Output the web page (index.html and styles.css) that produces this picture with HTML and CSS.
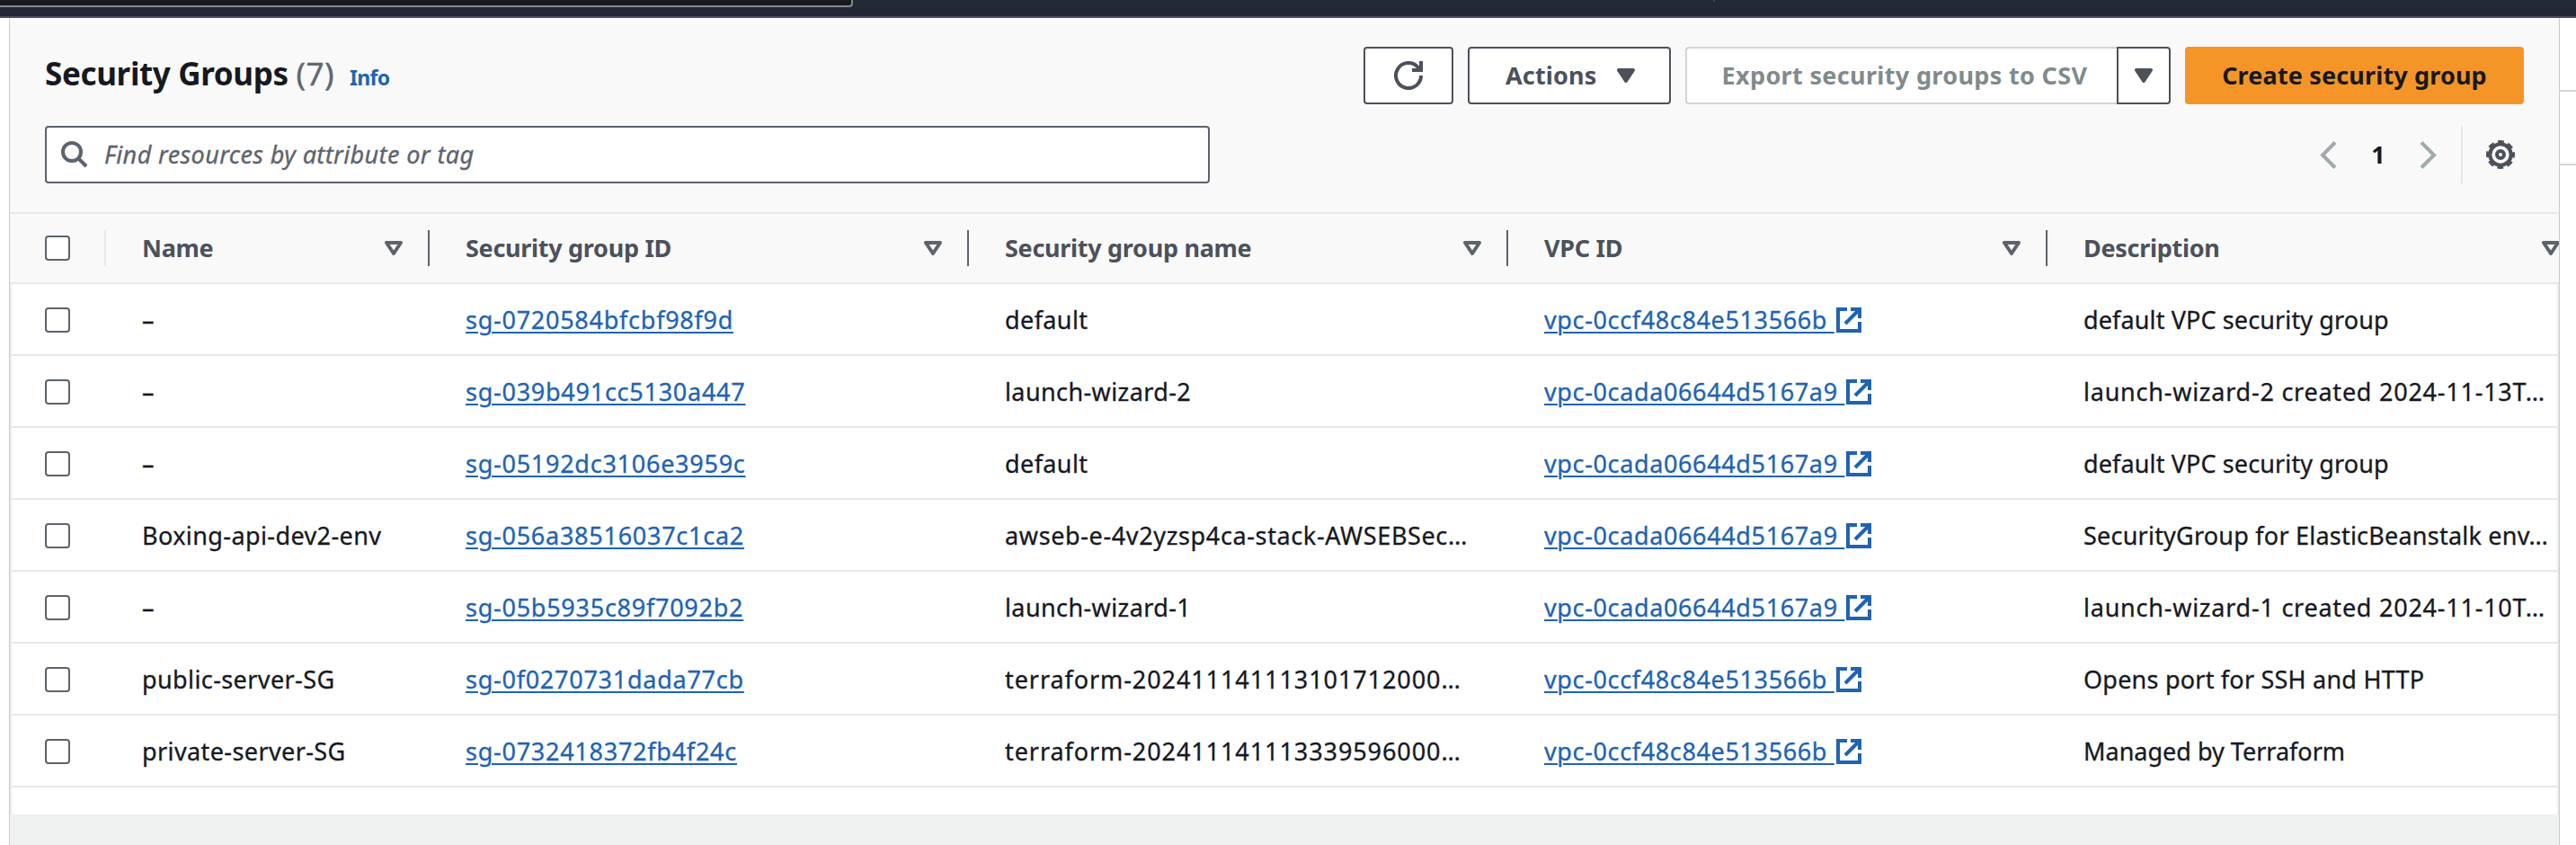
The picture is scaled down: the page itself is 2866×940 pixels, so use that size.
FILE: index.html
```html
<!DOCTYPE html>
<html lang="en">
<head>
<meta charset="utf-8">
<title>Security Groups</title>
<link rel="stylesheet" href="styles.css">
</head>
<body>
<svg class="defs" aria-hidden="true">
  <symbol id="ext" viewBox="0 0 28 28"><path d="M12 2H2V26H26V16M10 18L26 2M16 2H26V12"/></symbol>
  <symbol id="caret" viewBox="0 0 20 16"><path d="M2 2H18L10 14Z"/></symbol>
</svg>
<header class="nav"><div class="nav-search"></div><span class="nav-tick"></span></header>
<div class="page">
  <main class="panel">
    <section class="top">
      <div class="bar">
        <h1 class="title">Security Groups <span class="count">(7)</span><a class="info">Info</a></h1>
        <div class="actions">
          <button class="btn refresh"><svg class="i32" viewBox="0 0 32 32"><path d="M30 16A14 14 0 1 1 26.5 6.8L29 10M30 0V10H20"/></svg></button>
          <button class="btn menu">Actions<svg class="caret solid"><use href="#caret"/></svg></button>
          <div class="split">
            <button class="btn disabled">Export security groups to CSV</button>
            <button class="btn drop"><svg class="caret solid"><use href="#caret"/></svg></button>
          </div>
          <button class="btn primary">Create security group</button>
        </div>
      </div>
      <div class="bar tools">
        <div class="search"><svg class="mag" viewBox="0 0 30 30"><circle cx="12" cy="12" r="10"/><path d="M19 19L28 28"/></svg><span>Find resources by attribute or tag</span></div>
        <div class="pager">
          <svg class="chev" viewBox="0 0 19 31"><path d="M17 1.5L3 15.5L17 29.5"/></svg>
          <b class="num">1</b>
          <svg class="chev" viewBox="0 0 19 31"><path d="M2 1.5L16 15.5L2 29.5"/></svg>
          <span class="sep"></span>
          <svg class="i32 gear" viewBox="0 0 32 32"><circle cx="16" cy="16" r="11.7"/><circle class="teeth" cx="16" cy="16" r="14.5"/><circle cx="16" cy="16" r="4"/></svg>
        </div>
      </div>
    </section>
    <table class="grid">
      <colgroup><col class="c-check"><col class="c-name"><col class="c-wide"><col class="c-wide"><col class="c-wide"><col class="c-wide"></colgroup>
      <thead>
        <tr>
          <th><div class="h pick"><i class="box"></i></div></th>
          <th><div class="h">Name<svg class="caret"><use href="#caret"/></svg></div></th>
          <th><div class="h">Security group ID<svg class="caret"><use href="#caret"/></svg></div></th>
          <th><div class="h">Security group name<svg class="caret"><use href="#caret"/></svg></div></th>
          <th><div class="h">VPC ID<svg class="caret"><use href="#caret"/></svg></div></th>
          <th><div class="h">Description<svg class="caret"><use href="#caret"/></svg></div></th>
        </tr>
      </thead>
      <tbody>
        <tr><td><i class="box"></i></td><td>–</td><td class="id"><a>sg-0720584bfcbf98f9d</a></td><td>default</td><td class="vpc"><a>vpc-0ccf48c84e513566b </a><svg class="ext"><use href="#ext"/></svg></td><td class="snug">default VPC security group</td></tr>
        <tr><td><i class="box"></i></td><td>–</td><td class="id"><a>sg-039b491cc5130a447</a></td><td>launch-wizard-2</td><td class="vpc"><a>vpc-0cada06644d5167a9 </a><svg class="ext"><use href="#ext"/></svg></td><td class="loose">launch-wizard-2 created 2024-11-13T…</td></tr>
        <tr><td><i class="box"></i></td><td>–</td><td class="id"><a>sg-05192dc3106e3959c</a></td><td>default</td><td class="vpc"><a>vpc-0cada06644d5167a9 </a><svg class="ext"><use href="#ext"/></svg></td><td class="snug">default VPC security group</td></tr>
        <tr><td><i class="box"></i></td><td>Boxing-api-dev2-env</td><td class="id"><a>sg-056a38516037c1ca2</a></td><td class="vpc">awseb-e-4v2yzsp4ca-stack-AWSEBSec…</td><td class="vpc"><a>vpc-0cada06644d5167a9 </a><svg class="ext"><use href="#ext"/></svg></td><td class="even">SecurityGroup for ElasticBeanstalk env…</td></tr>
        <tr><td><i class="box"></i></td><td>–</td><td class="id"><a>sg-05b5935c89f7092b2</a></td><td>launch-wizard-1</td><td class="vpc"><a>vpc-0cada06644d5167a9 </a><svg class="ext"><use href="#ext"/></svg></td><td class="loose">launch-wizard-1 created 2024-11-10T…</td></tr>
        <tr><td><i class="box"></i></td><td>public-server-SG</td><td class="id"><a>sg-0f0270731dada77cb</a></td><td class="digits">terraform-202411141113101712000…</td><td class="vpc"><a>vpc-0ccf48c84e513566b </a><svg class="ext"><use href="#ext"/></svg></td><td class="even">Opens port for SSH and HTTP</td></tr>
        <tr><td><i class="box"></i></td><td>private-server-SG</td><td class="id"><a>sg-0732418372fb4f24c</a></td><td class="digits">terraform-202411141113339596000…</td><td class="vpc"><a>vpc-0ccf48c84e513566b </a><svg class="ext"><use href="#ext"/></svg></td><td class="tight">Managed by Terraform</td></tr>
      </tbody>
    </table>
    <footer class="foot"></footer>
  </main>
  <aside class="rail"><div class="rail-card"></div></aside>
</div>
</body>
</html>
```

FILE: styles.css
```css
* { box-sizing: border-box; }
body {
  margin: 0; width: 2866px; height: 940px; overflow: hidden;
  display: flex; flex-direction: column; background: #fff; color: #16191f;
  font: 27px/40px "Noto Sans", "Open Sans", sans-serif;
}
svg { fill: none; stroke: currentColor; stroke-width: 4; flex: none; }
.defs { display: none; }
.nav { height: 20px; flex: none; display: flex; background: #222836; border-bottom: 2px solid #4b4e58; }
.nav-search { width: 949px; height: 8px; background: #16191d; border: solid #7f8b8f; border-width: 0 2px 2px 0; border-bottom-right-radius: 4px; }
.nav-tick { width: 2px; height: 2px; margin-left: 957px; background: #414750; }
.page { flex: 1; display: flex; padding-left: 10px; }
.panel {
  width: 2838px; flex: none; overflow: hidden; display: flex; flex-direction: column;
  border: solid #c5cccd; border-width: 0 1px; box-shadow: inset 2px 0 1px #e9eced, inset -2px 0 1px #e9eced;
}
.top { height: 218px; flex: none; padding: 32px 39px 0; background: rgba(249, 249, 249, .97); border-bottom: 2px solid #e5eaea; }
.bar { display: flex; justify-content: space-between; align-items: center; height: 64px; }
.tools { margin-top: 24px; }
.title { margin: 0; font-size: 35px; font-weight: 700; letter-spacing: -.35px; white-space: nowrap; }
.count { font-weight: 400; color: #5f6770; letter-spacing: .5px; -webkit-text-stroke: .4px; }
.info { margin-left: 17px; font-size: 23px; font-weight: 700; color: #2063b3; letter-spacing: -.7px; }
.actions { display: flex; gap: 16px; }
.btn {
  height: 64px; padding: 0; display: flex; align-items: center; justify-content: center;
  font: 700 27px/40px "Noto Sans", "Open Sans", sans-serif; letter-spacing: .15px; white-space: nowrap;
  color: #4c515b; background: #fff; border: 2px solid #4c515b; border-radius: 4px;
}
.refresh { width: 100px; }
.menu { width: 226px; padding: 0 38px 0 40px; justify-content: space-between; }
.split { display: flex; }
.disabled { width: 480px; padding-left: 6px; letter-spacing: .34px; color: #7f8b8c; border-color: #d0d6d5; border-right: 0; border-radius: 4px 0 0 4px; }
.drop { width: 60px; border-radius: 0 4px 4px 0; }
.primary { width: 377px; color: #16191f; background: #f59527; border-color: #f59527; }
.i32 { width: 32px; height: 32px; color: #4c515b; }
.caret { width: 20px; height: 16px; stroke-linejoin: round; }
.solid { fill: currentColor; }
.search {
  width: 1296px; height: 64px; display: flex; align-items: center; padding-left: 16px;
  background: #fff; border: 2px solid #5c636c; border-radius: 4px;
  color: #5c636c; font-style: italic; letter-spacing: .39px; -webkit-text-stroke: .3px;
}
.mag { width: 30px; height: 30px; margin-right: 18px; }
.pager { display: flex; align-items: center; padding-right: 10px; color: #a0abad; }
.chev { width: 19px; height: 31px; }
.num { width: 92px; text-align: center; color: #16191f; }
.sep { width: 2px; height: 64px; margin: 0 26px 0 27px; background: #e5eaea; }
.teeth { stroke-width: 3; stroke-dasharray: 6.8 4.588; stroke-dashoffset: 3.4; }
.grid { width: 2868px; margin-left: -1px; table-layout: fixed; border-collapse: separate; border-spacing: 0; }
.c-check { width: 108px; }
.c-name { width: 360px; }
.c-wide { width: 600px; }
.grid th { height: 78px; padding: 0; background: rgba(249, 249, 249, .97); border-bottom: 2px solid #e5eaea; }
.h {
  height: 40px; display: flex; align-items: center; justify-content: space-between;
  padding: 0 28px 0 40px; border-right: 2px solid #5c636c; color: #4c515b; letter-spacing: -.3px;
}
.h .caret { color: #5c636c; }
.pick { border-color: #e5eaea; }
.grid td {
  height: 80px; padding: 2px 0 0 40px; border-bottom: 2px solid #e5e9e9;
  white-space: pre; letter-spacing: .4px; -webkit-text-stroke: .3px;
}
.grid .id { letter-spacing: .74px; }
.grid .vpc { letter-spacing: .63px; }
.grid .snug { letter-spacing: .12px; }
.grid .even { letter-spacing: .22px; }
.grid .loose { letter-spacing: .76px; }
.grid .digits { letter-spacing: .92px; }
.grid .tight { letter-spacing: 0; }
.box { display: block; width: 28px; height: 28px; background: #fff; border: 2px solid #5c636c; border-radius: 4px; }
td a { color: #2063b3; text-decoration: underline; text-decoration-thickness: 2px; text-underline-offset: 3px; }
.ext { width: 28px; height: 28px; margin-left: 2px; vertical-align: -4px; color: #2063b3; }
.foot { height: 34px; margin-top: 30px; flex: none; background: #eff1f1; }
.rail { flex: 1; padding-top: 80px; }
.rail-card { height: 84px; border: solid #d0d6d6; border-width: 2px 0; }
```
